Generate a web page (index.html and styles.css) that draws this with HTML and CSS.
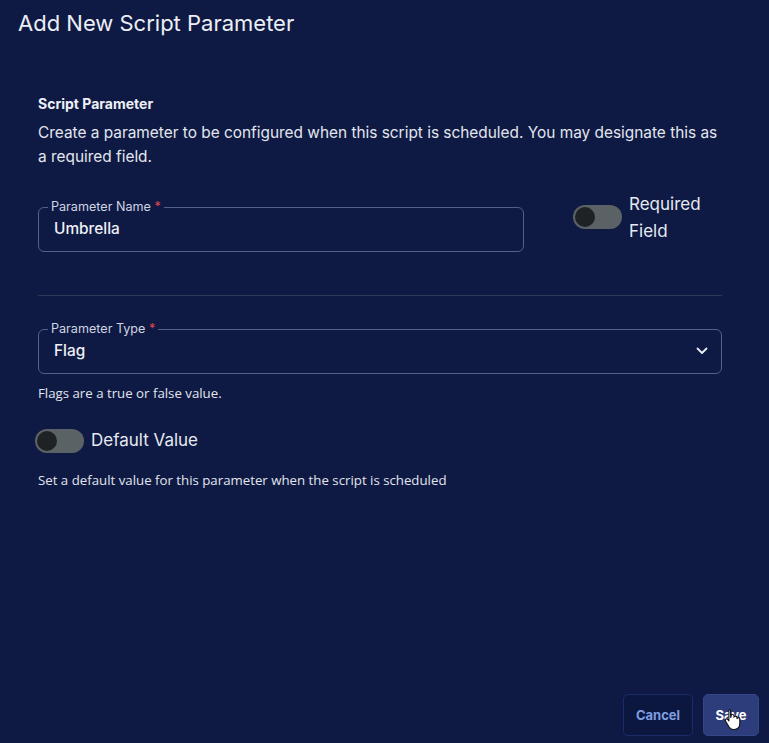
FILE: index.html
```html
<!DOCTYPE html>
<html lang="en">
<head>
<meta charset="utf-8">
<title>Add New Script Parameter</title>
<link rel="stylesheet" href="styles.css">
</head>
<body>
<div class="dialog">
  <header class="dialog-header">
    <h1 class="dialog-title">Add New Script Parameter</h1>
  </header>
  <main class="dialog-body">
    <h2 class="section-title">Script Parameter</h2>
    <p class="section-desc">Create a parameter to be configured when this script is scheduled. You may designate this as a required field.</p>

    <div class="name-row">
      <fieldset class="field name-field">
        <legend class="field-label">Parameter Name <span class="req">*</span></legend>
        <div class="field-value">Umbrella</div>
      </fieldset>
      <div class="switch-group required-group">
        <span class="switch"><span class="knob"></span></span>
        <span class="switch-text required-text">Required Field</span>
      </div>
    </div>

    <hr class="divider">

    <fieldset class="field type-field">
      <legend class="field-label">Parameter Type <span class="req">*</span></legend>
      <div class="select-row">
        <div class="field-value">Flag</div>
        <svg class="chevron" width="12" height="8" viewBox="0 0 12 8"><path d="M1.5 1.5 L6 6 L10.5 1.5" fill="none" stroke="#e8ecf5" stroke-width="1.8" stroke-linecap="round" stroke-linejoin="round"/></svg>
      </div>
    </fieldset>
    <p class="help">Flags are a true or false value.</p>

    <div class="switch-group default-group">
      <span class="switch"><span class="knob"></span></span>
      <span class="switch-text">Default Value</span>
    </div>
    <p class="help help-default">Set a default value for this parameter when the script is scheduled</p>
  </main>
  <footer class="dialog-footer">
    <button class="btn btn-cancel">Cancel</button>
    <button class="btn btn-save">Save
      <svg class="cursor" width="18" height="22" viewBox="0 0 18 22"><path d="M5 1.5c.9 0 1.6.7 1.6 1.6v6.2l.4-.1V8c0-.9.7-1.5 1.5-1.5s1.5.6 1.5 1.5v1.2c.2-.7.8-1.1 1.5-1.1.8 0 1.5.6 1.5 1.5v1c.2-.6.8-1 1.4-1 .8 0 1.4.7 1.4 1.5v4.6c0 3.3-2.4 5.8-5.6 5.8H9.5c-2 0-3.3-.9-4.4-2.5L1.6 13.200c-.5-.8-.3-1.7.4-2.1.7-.4 1.5-.2 2 .5l.9 1.3V3.1c0-.9.2-1.6.1-1.6z" fill="#fff" stroke="#111" stroke-width="1.1" stroke-linejoin="round"/></svg>
    </button>
  </footer>
</div>
</body>
</html>
```

FILE: styles.css
```css
* { box-sizing: border-box; }
html, body {
  margin: 0;
  padding: 0;
  background: #0e1a43;
}
body {
  font-family: Inter, "Liberation Sans", sans-serif;
  color: #e6e9f2;
}
.dialog {
  min-height: 743px;
  display: flex;
  flex-direction: column;
}
.dialog-header {
  padding: 9px 18px 0;
}
.dialog-title {
  margin: 0;
  font-size: 22px;
  font-weight: 400;
  line-height: 28px;
  color: #eceef5;
}
.dialog-body {
  padding: 57px 47px 0 38px;
}
.section-title {
  margin: 0;
  font-size: 14px;
  font-weight: 700;
  line-height: 20px;
  color: #eef0f6;
}
.section-desc {
  margin: 7px 0 0;
  font-size: 15.4px;
  line-height: 24px;
  color: #e3e6ef;
}
.name-row {
  display: flex;
  align-items: flex-start;
  gap: 49px;
  margin-top: 31px;
}
.field {
  margin: 0;
  padding: 0 15px 12px;
  border: 1px solid #55608a;
  border-radius: 6px;
  min-width: 0;
}
.name-field {
  width: 486px;
  flex: none;
}
.field-label {
  padding: 0 3px;
  margin-left: -6px;
  font-size: 12.6px;
  line-height: 14px;
  color: #cfd4e4;
}
.req { color: #e0464f; }
.field-value {
  margin-top: 5px;
  font-size: 15.4px;
  font-weight: 500;
  line-height: 20px;
  color: #eef0f6;
}
.switch-group {
  display: flex;
  align-items: flex-start;
  gap: 7px;
}
.switch {
  position: relative;
  flex: none;
  width: 49px;
  height: 24px;
  border-radius: 12px;
  background: #5b6266;
}
.knob {
  position: absolute;
  left: 2px;
  top: 2px;
  width: 20px;
  height: 20px;
  border-radius: 50%;
  background: #1f2225;
}
.switch-text {
  font-size: 17px;
  line-height: 27px;
  color: #e6e9f2;
}
.required-group {
  margin-top: -9px;
}
.required-group .switch {
  margin-top: 14px;
}
.required-text {
  width: 80px;
}
.divider {
  margin: 43px 0 0;
  border: 0;
  border-top: 1px solid #2d3a55;
}
.type-field {
  margin-top: 26px;
  padding-right: 13px;
}
.select-row {
  display: flex;
  align-items: center;
  justify-content: space-between;
}
.chevron {
  margin-top: 4px;
}
.help {
  margin: 10px 0 0;
  font-family: "Open Sans", "Noto Sans", sans-serif;
  font-size: 13.25px;
  line-height: 18px;
  color: #e2e5ee;
}
.default-group {
  margin: 25px 0 0 -3px;
  align-items: center;
  gap: 7px;
}
.help-default {
  margin-top: 17px;
}
.dialog-footer {
  margin-top: auto;
  display: flex;
  justify-content: flex-end;
  gap: 10px;
  padding: 0 10px 7px;
}
.btn {
  position: relative;
  height: 42px;
  border-radius: 5px;
  font-family: Inter, "Liberation Sans", sans-serif;
  font-size: 13px;
  font-weight: 700;
  cursor: pointer;
}
.btn-cancel {
  width: 70px;
  background: #0c1740;
  border: 1px solid #1b2a6b;
  color: #7f9ee0;
}
.btn-save {
  width: 56px;
  background: #2d3c7b;
  border: 1px solid #34458a;
  color: #ffffff;
}
.cursor {
  position: absolute;
  left: 20px;
  top: 13px;
}
```
